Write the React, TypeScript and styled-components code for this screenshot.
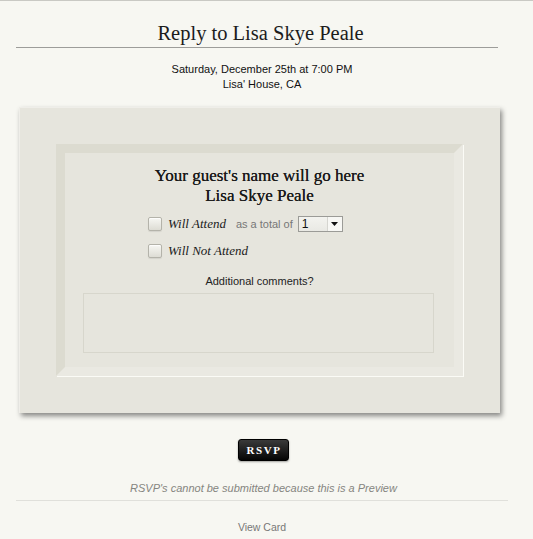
import { createGlobalStyle, styled } from 'styled-components';

const GlobalStyle = createGlobalStyle`
  html, body {
    margin: 0;
    padding: 0;
    background: #f7f7f2;
  }
  body {
    border-top: 1px solid #c9c9c4;
    font-family: 'Liberation Sans', Arial, sans-serif;
    color: #222;
  }
`;

const App = () => {
  return (
    <>
      <GlobalStyle />
      <Page>
        <Title>Reply to Lisa Skye Peale</Title>
        <EventInfo>
          Saturday, December 25th at 7:00 PM
          <br />
          Lisa' House, CA
        </EventInfo>

        <Card>
          <Frame>
            <GuestName>
              Your guest's name will go here
              <br />
              Lisa Skye Peale
            </GuestName>

            <Choices>
              <Choice>
                <Check />
                <ChoiceLabel>Will Attend</ChoiceLabel>
                <Hint>as a total of</Hint>
                <Select>
                  <span>1</span>
                  <SelectArrow>
                    <svg width='7' height='4' viewBox='0 0 7 4'>
                      <path d='M0 0h7L3.5 4z' fill='#111' />
                    </svg>
                  </SelectArrow>
                </Select>
              </Choice>
              <Choice>
                <Check />
                <ChoiceLabel>Will Not Attend</ChoiceLabel>
              </Choice>
            </Choices>

            <CommentsLabel>Additional comments?</CommentsLabel>
            <Comments />
          </Frame>
        </Card>

        <RsvpButton>RSVP</RsvpButton>
        <PreviewNote>RSVP's cannot be submitted because this is a Preview</PreviewNote>
        <Footer>View Card</Footer>
      </Page>
    </>
  );
};

export default App;

const Page = styled.div`
  width: 492px;
  margin-left: 16px;
  display: flex;
  flex-direction: column;
  align-items: center;
`;

const Title = styled.h1`
  align-self: stretch;
  margin: 18px 10px 0 0;
  padding-left: 7px;
  font-family: 'Liberation Serif', 'Times New Roman', serif;
  font-weight: normal;
  font-size: 20.5px;
  line-height: 28px;
  text-align: center;
  color: #1c1c1c;
  border-bottom: 1px solid #9d9d9a;
`;

const EventInfo = styled.div`
  margin-top: 14px;
  font-size: 11px;
  line-height: 15px;
  text-align: center;
  color: #111;
`;

const Card = styled.div`
  align-self: flex-start;
  margin: 15px 0 0 3px;
  width: 481px;
  height: 306px;
  box-sizing: border-box;
  padding: 37px;
  background: #e6e5dd;
  border-top: 1px solid #efeee9;
  border-left: 1px solid #efeee9;
  box-shadow: 2px 3px 5px rgba(0, 0, 0, 0.45);
`;

const Frame = styled.div`
  box-sizing: border-box;
  height: 232px;
  margin: -1px 0 0 -1px;
  border-style: solid;
  border-width: 9px;
  border-color: #dcdbd0 #eae9e2 #eae9e2 #dcdbd0;
  box-shadow: 1px 1px 0 #fbfbf6;
  background: #e6e5dd;
  display: flex;
  flex-direction: column;
  align-items: center;
`;

const GuestName = styled.div`
  margin-top: 13px;
  font-family: 'Liberation Serif', 'Times New Roman', serif;
  font-size: 17px;
  line-height: 20px;
  text-align: center;
  color: #1a1a1a;
  text-shadow: 0 0 0.6px #1a1a1a;
`;

const Choices = styled.div`
  align-self: stretch;
  margin-top: 10px;
  padding-left: 83px;
  display: flex;
  flex-direction: column;
  gap: 11px;
`;

const Choice = styled.div`
  display: flex;
  align-items: center;
  height: 16px;
`;

const Check = styled.span`
  width: 12px;
  height: 12px;
  border: 1px solid #b4b3aa;
  border-radius: 2px;
  background: linear-gradient(#f7f7f3, #dddcd4);
  box-shadow: inset 0 1px 1px rgba(255, 255, 255, 0.8), 0 1px 1px rgba(0, 0, 0, 0.08);
`;

const ChoiceLabel = styled.span`
  margin-left: 6px;
  font-family: 'Liberation Serif', 'Times New Roman', serif;
  font-style: italic;
  font-size: 13px;
  color: #1a1a1a;
`;

const Hint = styled.span`
  margin: 0 5px 0 10px;
  font-size: 11px;
  color: #777;
`;

const Select = styled.span`
  width: 45px;
  height: 16px;
  box-sizing: border-box;
  border: 1px solid #9b9b97;
  background: linear-gradient(#f3f3ef, #e9e9e4);
  display: flex;
  align-items: center;
  justify-content: space-between;
  padding-left: 3px;
  font-size: 12px;
  color: #111;
`;

const SelectArrow = styled.span`
  width: 14px;
  height: 14px;
  background: #f7f7f4;
  border-left: 1px solid #d5d5d0;
  display: flex;
  align-items: center;
  justify-content: center;
`;

const CommentsLabel = styled.div`
  margin-top: 15px;
  font-size: 11px;
  line-height: 15px;
  color: #222;
`;

const Comments = styled.div`
  margin: 4px 3px 0 0;
  width: 351px;
  height: 60px;
  box-sizing: border-box;
  border: 1px solid #d7d6cc;
  background: #e6e5dd;
`;

const RsvpButton = styled.button`
  margin-top: 26px;
  margin-left: 3px;
  width: 51px;
  height: 22px;
  border: 1px solid #000;
  border-radius: 3px;
  background: linear-gradient(#3a3a3a, #050505);
  box-shadow: 0 1px 2px rgba(0, 0, 0, 0.35);
  color: #fff;
  font-family: 'Liberation Serif', 'Times New Roman', serif;
  font-weight: bold;
  font-size: 11px;
  letter-spacing: 1.6px;
  padding: 0 0 0 1px;
  cursor: pointer;
`;

const PreviewNote = styled.div`
  margin-top: 20px;
  margin-left: 3px;
  font-size: 11px;
  line-height: 15px;
  font-style: italic;
  color: #858580;
`;

const Footer = styled.div`
  align-self: stretch;
  margin-top: 4px;
  padding-top: 20px;
  border-top: 1px solid #e0e0db;
  font-size: 10.5px;
  line-height: 13px;
  text-align: center;
  color: #777;
`;
